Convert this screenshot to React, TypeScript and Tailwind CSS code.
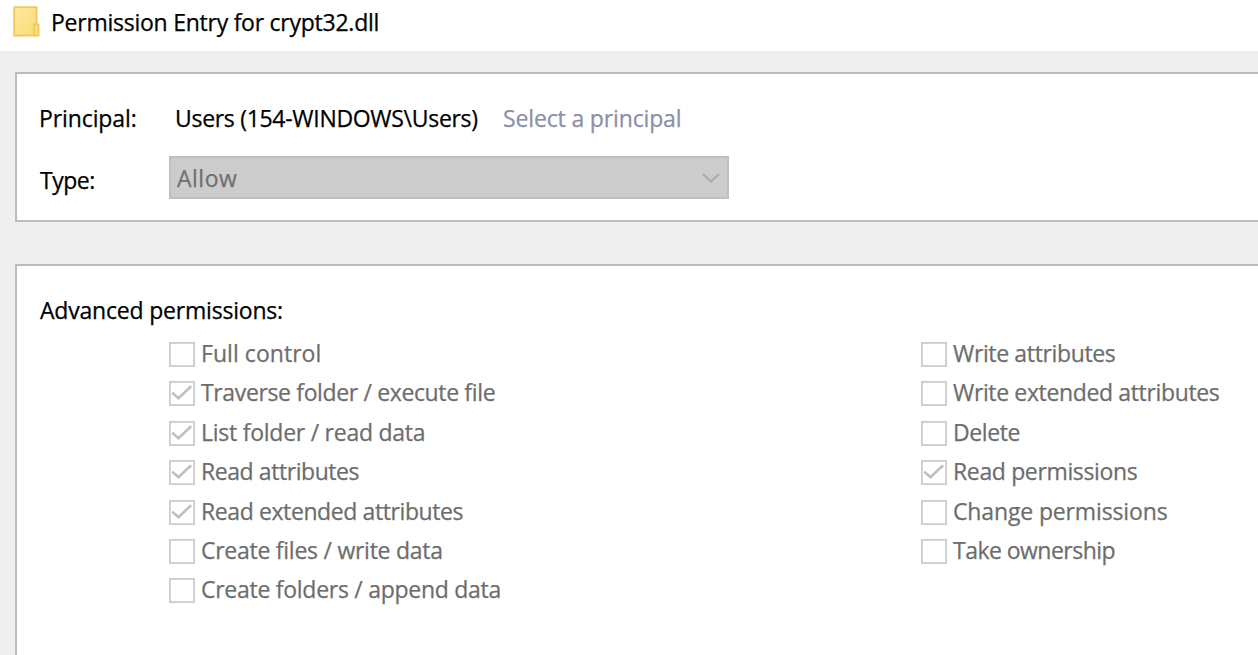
type Permission = { label: string; checked?: boolean; tracking: string };

const leftPermissions: Permission[] = [
  { label: "Full control", tracking: "tracking-[0.05px]" },
  { label: "Traverse folder / execute file", checked: true, tracking: "tracking-[-0.36px]" },
  { label: "List folder / read data", checked: true, tracking: "tracking-[-0.25px]" },
  { label: "Read attributes", checked: true, tracking: "tracking-[-0.43px]" },
  { label: "Read extended attributes", checked: true, tracking: "tracking-[-0.4px]" },
  { label: "Create files / write data", tracking: "tracking-[-0.26px]" },
  { label: "Create folders / append data", tracking: "tracking-[-0.27px]" },
];

const rightPermissions: Permission[] = [
  { label: "Write attributes", tracking: "tracking-[-0.36px]" },
  { label: "Write extended attributes", tracking: "tracking-[-0.36px]" },
  { label: "Delete", tracking: "tracking-[-0.4px]" },
  { label: "Read permissions", checked: true, tracking: "tracking-[-0.36px]" },
  { label: "Change permissions", tracking: "tracking-[-0.14px]" },
  { label: "Take ownership", tracking: "tracking-[-0.53px]" },
];

function FolderIcon() {
  return (
    <svg width="28" height="32" viewBox="0 0 28 32" className="shrink-0">
      <defs>
        <linearGradient id="folder" x1="0" y1="0" x2="1" y2="1">
          <stop offset="0" stopColor="#ffe9a2" />
          <stop offset="1" stopColor="#fbdb78" />
        </linearGradient>
      </defs>
      <rect x="1.2" y="1.2" width="22.4" height="28.4" fill="url(#folder)" stroke="#ecc95a" strokeWidth="1.8" />
      <rect x="21.2" y="18.4" width="4.4" height="11.2" fill="#fbdf86" stroke="#ecc95a" strokeWidth="1.6" />
    </svg>
  );
}

function Checkbox({ checked }: { checked?: boolean }) {
  return (
    <svg width="26" height="25" viewBox="0 0 26 25" className="mt-[6px] shrink-0" role="checkbox" aria-checked={!!checked}>
      <rect x="0.9" y="0.9" width="24.2" height="23.2" fill="#fff" stroke="#cccccc" strokeWidth="1.8" />
      {checked && <path d="M3.2 11.6L9.4 17.2L22.2 5.2" fill="none" stroke="#bfbfbf" strokeWidth="2.6" />}
    </svg>
  );
}

function PermissionList({ items }: { items: Permission[] }) {
  return (
    <ul className="flex flex-col text-[#6d6d6d]">
      {items.map((p) => (
        <li key={p.label} className="flex h-[39.4px] items-start gap-[6px]">
          <Checkbox checked={p.checked} />
          <span className={`pt-px ${p.tracking}`}>{p.label}</span>
        </li>
      ))}
    </ul>
  );
}

export default function App() {
  return (
    <div className="flex h-[655px] w-full flex-col overflow-hidden whitespace-nowrap bg-[#efefef] font-['Open_Sans','Noto_Sans',sans-serif] text-[23px] leading-8 text-black [-webkit-text-stroke:0.25px]">
      <header className="flex h-[51px] shrink-0 items-start gap-[10px] bg-white pl-[13px] pt-[6px]">
        <FolderIcon />
        <h1 className="tracking-[-0.25px]">Permission Entry for crypt32.dll</h1>
      </header>

      <section className="ml-[15px] mt-[21px] h-[150px] shrink-0 border-2 border-r-0 border-[#bcbcbc] bg-white pl-[22px] pt-[28px]">
        <div className="flex">
          <span className="w-[136px] tracking-[-0.1px]">Principal:</span>
          <span className="w-[328px] tracking-[-0.3px]">Users (154-WINDOWS\Users)</span>
          <span className="tracking-[-0.15px] text-[#8a90a8]">Select a principal</span>
        </div>
        <div className="mt-[22px] flex">
          <span className="w-[130px] pt-[8px] pl-px tracking-[-0.5px]">Type:</span>
          <div className="flex h-[43px] w-[560px] items-start justify-between border-2 border-[#bfbfbf] bg-[#cccccc] pl-[6px] pt-[4px] pr-[7px] text-[#6f6f6f]">
            <span className="tracking-[0.5px]">Allow</span>
            <svg width="18" height="10" viewBox="0 0 18 10" className="mt-[11px]">
              <path d="M1 1L9 8.4L17 1" fill="none" stroke="#ababab" strokeWidth="2.1" />
            </svg>
          </div>
        </div>
      </section>

      <section className="ml-[15px] mt-[42px] flex-1 border-l-2 border-t-2 border-[#bcbcbc] bg-white pl-[22px] pt-[28px]">
        <h2 className="pl-px tracking-[-0.2px]">Advanced permissions:</h2>
        <div className="mt-[10px] flex pl-[130px]">
          <div className="w-[752px]">
            <PermissionList items={leftPermissions} />
          </div>
          <PermissionList items={rightPermissions} />
        </div>
      </section>
    </div>
  );
}
